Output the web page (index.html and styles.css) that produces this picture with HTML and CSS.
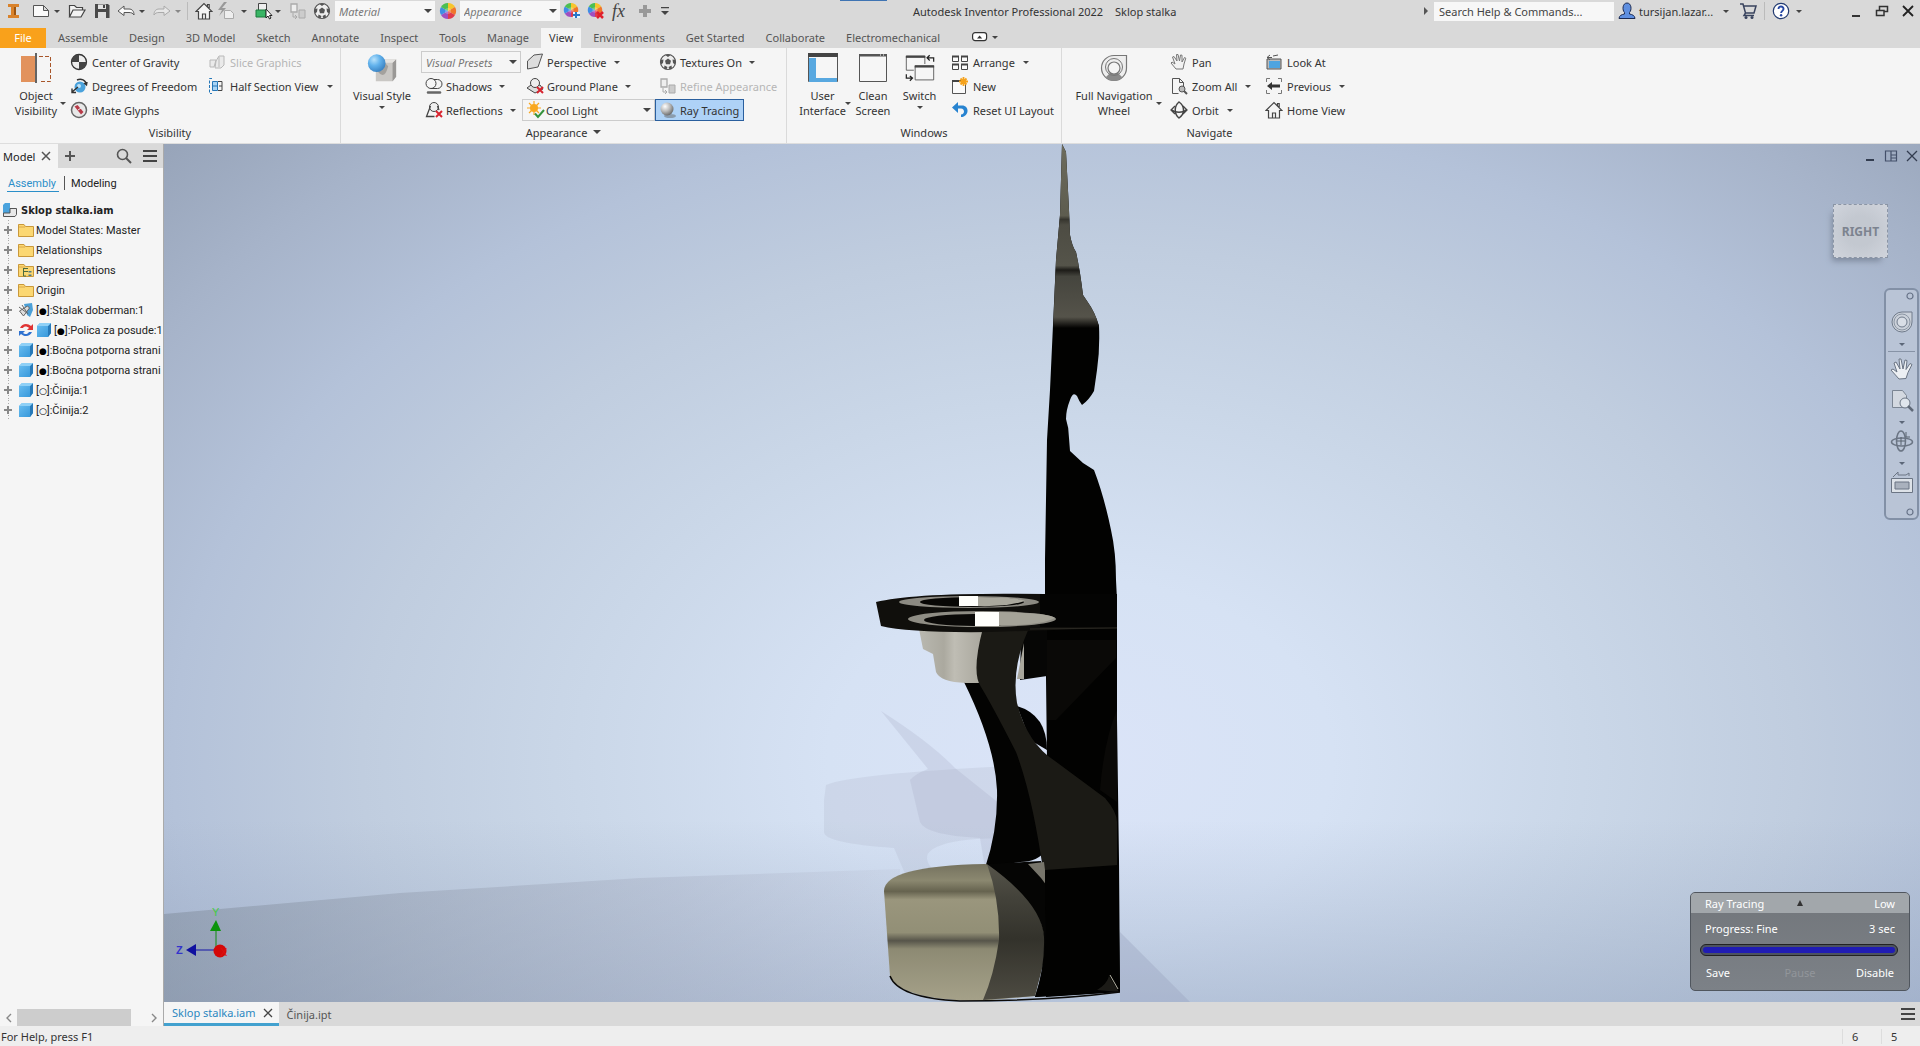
FILE: index.html
```html
<!DOCTYPE html>
<html lang="en">
<head>
<meta charset="utf-8">
<title>Autodesk Inventor Professional 2022 - Sklop stalka</title>
<link rel="stylesheet" href="styles.css">
</head>
<body>
<svg class="sprite" aria-hidden="true">
  <defs>
    <linearGradient id="cubeFace" x1="0" y1="0" x2="1" y2="1"><stop offset="0" stop-color="#6cc0f2"/><stop offset="1" stop-color="#3294d8"/></linearGradient>
    <radialGradient id="ballBlue" cx=".35" cy=".3" r=".7"><stop offset="0" stop-color="#b8e2fb"/><stop offset=".5" stop-color="#62b2ec"/><stop offset="1" stop-color="#3d86c6"/></radialGradient>
    <radialGradient id="ballGrey" cx=".35" cy=".3" r=".75"><stop offset="0" stop-color="#fff"/><stop offset=".5" stop-color="#bbb"/><stop offset="1" stop-color="#666"/></radialGradient>
  </defs>
  <symbol id="folder" viewBox="0 0 16 14"><path d="M.5 1.500H6l1.500 2h8v10H.5z" fill="#fbd772" stroke="#c9983a"/><path d="M1 4h6" stroke="#dba94a"/></symbol>
  <symbol id="cube" viewBox="0 0 16 16"><path d="M1 4l3-3h11v10l-3 4H1z" fill="url(#cubeFace)"/><path d="M12 4l3-3v10l-3 4z" fill="#2779b8"/><path d="M1 4l3-3h11l-3 3z" fill="#8fd0f6"/></symbol>
  <symbol id="mesh" viewBox="0 0 18 18"><circle cx="9" cy="9" r="7.500" fill="#eee" stroke="#555" stroke-width="1.200"/><path d="M9 5.500l3 2.200-1 3.600H7L6 7.700zM6 1.800h6L9 4zM1.500 7l3-.5L4 10l-2 1.500zM16.500 7l-3-.5.5 3.500 2 1.500zM5 15.500l.5-3 3 1.500-1 2.500zM13 15.500l-.5-3-3 1.500 1 2.500z" fill="#555"/></symbol>
  <symbol id="wheel" viewBox="0 0 18 18"><path d="M9 9V1a8 8 0 0 1 7 4z" fill="#f7c52c"/><path d="M9 9l7-4a8 8 0 0 1 0 8z" fill="#f0752a"/><path d="M9 9l7 4a8 8 0 0 1-7 4z" fill="#e03a4b"/><path d="M9 9v8a8 8 0 0 1-7-4z" fill="#a04fc0"/><path d="M9 9l-7 4a8 8 0 0 1 0-8z" fill="#3f8ee6"/><path d="M9 9L2 5a8 8 0 0 1 7-4z" fill="#4cbf52"/><circle cx="9" cy="9" r="3" fill="#fff" opacity=".25"/></symbol>
  <symbol id="house" viewBox="0 0 18 18"><path d="M1 9.500L9 1.500l8 8h-2.500V17h-11V9.500zM12.500 5V2.500h1.700V7M7.500 17v-5h3v5" fill="#f4f4f4" stroke="#444" stroke-width="1.200"/></symbol>
  <symbol id="refine" viewBox="0 0 18 18"><path d="M2 2h6v8H2z" fill="#eee" stroke="#aaa" stroke-width="1.300"/><path d="M10 8h6v8h-6z" fill="#ccc" stroke="#aaa"/><path d="M4 11v4h4M6 13l2 2-2 2" fill="none" stroke="#aaa"/></symbol>
</svg>

<div class="app">
<header class="titlebar">
  <div class="quick">
    <svg viewBox="0 0 18 18"><path d="M4 2h11v3h-3v8h3v3H4v-3h3V5H4z" fill="#d9822b"/><path d="M10 5h2v8h-2z" fill="#9a5412"/></svg>
    <button aria-label="New"><svg viewBox="0 0 18 18"><path d="M1.500 3.500h10l5 5v6h-15zM11.500 3.500v5h5" fill="#fafafa" stroke="#555"/></svg></button><i class="caret"></i>
    <button aria-label="Open"><svg viewBox="0 0 18 18"><path d="M1.500 15V3.500h5l2 2h6V8M1.500 15L5 8h12l-4 7z" fill="#f2f2f2" stroke="#444" stroke-width="1.200"/></svg></button>
    <button aria-label="Save"><svg viewBox="0 0 18 18"><path d="M2 2h13l1.500 1.500V16H2z" fill="#4a4a4a"/><path d="M5 2.500h8V7H5z" fill="#e4e4e4"/><path d="M5 10h8v6H5z" fill="#ddd"/><path d="M10 3h2v3h-2z" fill="#444"/></svg></button>
    <button aria-label="Undo"><svg viewBox="0 0 18 18"><path d="M1 9l6-5v3h5c3 0 5 2 5 6-1-2-3-2.500-5-2.500H7v3z" fill="#fafafa" stroke="#555"/></svg></button><i class="caret"></i>
    <button aria-label="Redo"><svg viewBox="0 0 18 18"><path d="M17 9l-6-5v3H6c-3 0-5 2-5 6 1-2 3-2.500 5-2.500h5v3z" fill="#e6e6e6" stroke="#aaa"/></svg></button><i class="caret dim"></i>
    <i class="rule"></i>
    <button aria-label="Home"><svg><use href="#house"/></svg></button>
    <button aria-label="Update"><svg viewBox="0 0 18 18"><path d="M7 0L1 8h4l-3 6 7-8H5l5-6z" fill="#999"/><path d="M7.500 8.500h6l3 3v5h-9z" fill="#eee" stroke="#aaa"/></svg></button><i class="caret"></i>
    <button aria-label="Select"><svg viewBox="0 0 18 18"><path d="M3.500 1.500h8v8h-8z" fill="#eee" stroke="#444"/><path d="M1 8h10v7H1z" fill="#39b565" stroke="#1b7a3c"/><path d="M11 7v9l2-2 1.500 3 1.500-1-1.500-2.500H17z" fill="#fff" stroke="#222"/></svg></button><i class="caret"></i>
    <svg><use href="#refine"/></svg>
    <svg><use href="#mesh"/></svg>
    <label class="combo flat"><select aria-label="Material"><option>Material</option></select></label>
    <svg><use href="#wheel"/></svg>
    <label class="combo flat"><select aria-label="Appearance"><option>Appearance</option></select></label>
    <button aria-label="Adjust"><svg viewBox="0 0 18 18"><use href="#wheel" width="16" height="16"/><path d="M10 10h7v6h-7z" fill="#eaf4ff"/><path d="M10 13h7M13 10v6" stroke="#2a77c8" stroke-width="2"/></svg></button>
    <button aria-label="Clear"><svg viewBox="0 0 18 18"><use href="#wheel" width="16" height="16"/><path d="M10 10l6 6m0-6l-6 6" stroke="#e0202c" stroke-width="2.500"/></svg></button>
    <button class="fx" aria-label="Parameters">fx</button>
    <svg viewBox="0 0 18 18"><path d="M9 3v12M3 9h12" stroke="#999" stroke-width="4"/></svg>
    <svg viewBox="0 0 18 18"><path d="M5 5h8v1.200H5zM5 9h8l-4 4z" fill="#444"/></svg>
  </div>
  <div class="title"><span>Autodesk Inventor Professional 2022</span><span>Sklop stalka</span></div>
  <div class="account">
    <i class="caret right"></i>
    <input type="text" aria-label="Search" placeholder="Search Help &amp; Commands...">
    <svg viewBox="0 0 18 18"><path d="M1 16.500c0-3 3-4 5.500-4.500V10.500C4 8 4.500 1 9 1s5 7 2.500 9.500V12c2.500.5 5.500 1.500 5.500 4.500z" fill="#5f8fe0" stroke="#1c2a52"/></svg>
    <span class="user">tursijan.lazar...</span><i class="caret"></i>
    <svg viewBox="0 0 18 18"><path d="M1 2h3l2.500 9H15l2-7H5M6.500 11L5 13.500h10" fill="none" stroke="#39435e" stroke-width="1.500"/><circle cx="7" cy="15.500" r="1.500" fill="#39435e"/><circle cx="13" cy="15.500" r="1.500" fill="#39435e"/></svg>
    <i class="rule"></i>
    <svg viewBox="0 0 18 18"><circle cx="9" cy="9" r="7.700" fill="#fff" stroke="#223a70" stroke-width="1.200"/><path d="M6.500 7c0-3.500 5.200-3 5 0 0 1.800-2.400 2-2.400 4" fill="none" stroke="#2748a5" stroke-width="1.900"/><circle cx="9.100" cy="13.200" r="1.200" fill="#2748a5"/></svg><i class="caret"></i>
    <span class="wins">
      <button aria-label="Minimize"><svg viewBox="0 0 14 14"><path d="M3 12h8" stroke="#333" stroke-width="2"/></svg></button>
      <button aria-label="Restore"><svg viewBox="0 0 14 14"><path d="M4.500 6V2.500h8v5H9M1.500 6.500H9v5H1.500z" fill="none" stroke="#333" stroke-width="1.500"/></svg></button>
      <button aria-label="Close"><svg viewBox="0 0 14 14"><path d="M2 2l10 10M12 2L2 12" stroke="#222" stroke-width="1.800"/></svg></button>
    </span>
  </div>
</header>

<nav class="tabs">
  <button class="file">File</button><button>Assemble</button><button>Design</button><button>3D Model</button><button>Sketch</button><button>Annotate</button><button>Inspect</button><button>Tools</button><button>Manage</button><button class="on">View</button><button>Environments</button><button>Get Started</button><button>Collaborate</button><button>Electromechanical</button>
  <button class="fold" aria-label="Minimize ribbon"><svg viewBox="0 0 16 10"><rect x=".6" y=".6" width="14" height="8" rx="2.500" fill="#fff" stroke="#333" stroke-width="1.200"/><path d="M5 6.500l2.600-3 2.600 3z" fill="#333"/></svg><i class="caret"></i></button>
</nav>

<section class="ribbon">
  <div class="panel visibility">
    <div class="tools">
      <button class="big side"><svg viewBox="0 0 30 30"><path d="M0 3h14v26H0z" fill="#e2925c"/><path d="M15 0v30" stroke="#333" stroke-width="1.500"/><path d="M18 3.500h11.500v25H18" fill="none" stroke="#a8562a" stroke-dasharray="4 2"/></svg><span>Object<br>Visibility<i class="caret"></i></span></button>
      <div class="col">
        <button><svg viewBox="0 0 18 18"><circle cx="9" cy="9" r="7.500" fill="#eee" stroke="#333" stroke-width="1.300"/><path d="M9 9V1.500A7.500 7.500 0 0 0 1.500 9zM9 9v7.500A7.500 7.500 0 0 0 16.500 9z" fill="#444"/></svg>Center of Gravity</button>
        <button><svg viewBox="0 0 18 18"><circle cx="10" cy="10" r="5.500" fill="#4aa2dc"/><circle cx="9" cy="9" r="2" fill="#bfe3f8"/><path d="M7 3c4-2 9 0 9.500 5M14 6l2.500 2L17 5M8 10l-6 5M2 11.500V15.500h4" fill="none" stroke="#333" stroke-width="1.400"/></svg>Degrees of Freedom</button>
        <button><svg viewBox="0 0 18 18"><circle cx="9" cy="9" r="7.500" fill="#e8e8e8" stroke="#666" stroke-width="1.500"/><path d="M4.500 5.500l3-1.500 6 7-2.500 2.500z" fill="#b83a48"/><path d="M8 9l3-2" stroke="#eee"/></svg>iMate Glyphs</button>
      </div>
      <div class="col">
        <button disabled><svg viewBox="0 0 18 18"><path d="M2 7h6l-2 7H2zM8 8l3-5h5v9l-3 3H7zM11 4v10" fill="#eaeaea" stroke="#b8b8b8"/></svg>Slice Graphics</button>
        <button><svg viewBox="0 0 18 18"><path d="M4.500 4.500h5v9h-5zM9.500 9h-5" fill="#a9d4f5" stroke="#2577b8"/><path d="M10 4.500h4v9h-4M11 9h3" fill="none" stroke="#444"/><path d="M4 1.500H1.500v15H4" fill="none" stroke="#2577b8" stroke-dasharray="3 1.500"/></svg>Half Section View<i class="caret"></i></button>
      </div>
    </div>
    <div class="name">Visibility</div>
  </div>

  <div class="panel appearance">
    <div class="tools">
      <button class="big"><svg viewBox="0 0 34 32"><path d="M10 9l4-3h19v20l-4 5H10z" fill="#c9c7c4"/><path d="M29 10l4-4v20l-4 5z" fill="#9a9896"/><path d="M10 9l4-3h19l-4 4H10z" fill="#e5e3e0"/><path d="M12 20q8 10 12-6l-3-3z" fill="#8b8784" opacity=".6"/><circle cx="11" cy="10.500" r="10" fill="url(#ballBlue)"/></svg><span>Visual Style</span><i class="caret"></i></button>
      <div class="col">
        <label class="combo"><select class="muted" aria-label="Visual presets"><option>Visual Presets</option></select></label>
        <button class="in"><svg viewBox="0 0 18 18"><circle cx="6" cy="6.500" r="5" fill="#f6f6f6" stroke="#444"/><path d="M9 2.500h3.500a4.500 4.500 0 0 1 0 9H6" fill="none" stroke="#444"/><path d="M3 15.500h12" stroke="#666" stroke-width="2.500" stroke-linecap="round"/></svg>Shadows<i class="caret"></i></button>
        <button class="in"><svg viewBox="0 0 18 18"><circle cx="9" cy="6" r="4.500" fill="#eee" stroke="#444"/><path d="M5.500 5L1.500 15.500h8M12.500 5l1.500 4" fill="none" stroke="#444" stroke-width="1.300"/><path d="M11 10l6 6m0-6l-6 6" stroke="#d8242f" stroke-width="2"/></svg>Reflections<i class="caret"></i></button>
      </div>
      <div class="col">
        <button class="in"><svg viewBox="0 0 18 18"><path d="M1.500 16V8L8 2l8.500-1L12 14z" fill="#ddd" stroke="#555"/></svg>Perspective<i class="caret"></i></button>
        <button class="in"><svg viewBox="0 0 18 18"><path d="M1 11l4-3h9l3 4-8 4z" fill="#ddd" stroke="#444"/><circle cx="9" cy="6" r="4.500" fill="#eee" stroke="#444"/><path d="M11 10l6 6m0-6l-6 6" stroke="#d8242f" stroke-width="2"/></svg>Ground Plane<i class="caret"></i></button>
        <label class="combo light"><svg viewBox="0 0 18 18"><circle cx="7" cy="7" r="4" fill="#f9a820"/><path d="M7 0v14M0 7h14M2 2l10 10M12 2L2 12" stroke="#f9a820" stroke-width="1.200"/><path d="M8 12.500l3 3.500 6-7" fill="none" stroke="#35933d" stroke-width="2"/></svg><select aria-label="Lighting style"><option>Cool Light</option></select></label>
      </div>
      <div class="col">
        <button class="in"><svg><use href="#mesh"/></svg>Textures On<i class="caret"></i></button>
        <button class="in" disabled><svg><use href="#refine"/></svg>Refine Appearance</button>
        <button class="in pressed"><svg viewBox="0 0 18 18"><ellipse cx="11" cy="15" rx="6" ry="2" fill="#666" opacity=".5"/><circle cx="8" cy="8" r="6.500" fill="url(#ballGrey)"/></svg>Ray Tracing</button>
      </div>
    </div>
    <div class="name">Appearance<i class="caret wide"></i></div>
  </div>

  <div class="panel windows">
    <div class="tools">
      <button class="big side"><svg viewBox="0 0 30 30"><path d="M.5 1.500h29v27H.5z" fill="#f6f6f6" stroke="#555"/><path d="M0 0h30v4H0z" fill="#444"/><path d="M1 5h7v24H1z" fill="#58a8e0"/><path d="M1 25h28v4H1z" fill="#58a8e0"/></svg><span>User<br>Interface<i class="caret"></i></span></button>
      <button class="big"><svg viewBox="0 0 30 30"><path d="M1.500 1.500h27v27h-27z" fill="#f6f6f6" stroke="#555"/><path d="M1 1h28v2.500H1z" fill="#555"/><path d="M22 2h1m2 0h1" stroke="#fff"/></svg><span>Clean<br>Screen</span></button>
      <button class="big switch"><svg viewBox="0 0 34 30"><path d="M10 17.500H1.500v-16h21v9" fill="#f6f6f6" stroke="#555"/><path d="M1 1h22v2.500H1z" fill="#444"/><path d="M11.500 12.500h21v16h-21z" fill="#f6f6f6" stroke="#555"/><path d="M11 12h22v2.500H11z" fill="#444"/><path d="M32.500 8V3.500H25M28 .5l-3 3 3 3M1.500 22v4.500H8M5.500 24l3 2.500-3 3" fill="none" stroke="#222" stroke-width="1.400"/></svg><span>Switch</span><i class="caret"></i></button>
      <div class="col">
        <button><svg viewBox="0 0 18 18"><path d="M1.500 3.500h6v5h-6zM10.500 3.500h6v5h-6zM1.500 11.500h6v5h-6zM10.500 11.500h6v5h-6z" fill="#fafafa" stroke="#444"/><path d="M1 3.500h7m2 0h7M1 11.500h7m2 0h7" stroke="#444" stroke-width="2"/></svg>Arrange<i class="caret"></i></button>
        <button><svg viewBox="0 0 18 18"><path d="M1.500 3.500h13v13h-13z" fill="#fafafa" stroke="#555"/><path d="M1 4h9" stroke="#444" stroke-width="2"/><path d="M12.500 0v9M8 4.500h9M9.500 1.500l6 6m0-6l-6 6" stroke="#f5a21c" stroke-width="1.800"/></svg>New</button>
        <button><svg viewBox="0 0 18 18"><path d="M1 6.500L7 1v3.500h4c8 0 7 11.500-1 11.500v-2.500c4 0 4-6 0-6H7V12z" fill="#2783d0"/></svg>Reset UI Layout</button>
      </div>
    </div>
    <div class="name">Windows</div>
  </div>

  <div class="panel navigate">
    <div class="tools">
      <button class="big side"><svg viewBox="0 0 30 30"><path d="M15 2.500h12.500V15A12.500 12.500 0 1 1 15 2.500z" fill="#eee" stroke="#777" stroke-width="1.200"/><path d="M7 24a10 10 0 0 0 16 0l-4-4h-8z" fill="#8a8a8a"/><circle cx="15" cy="14" r="8.500" fill="none" stroke="#777"/><circle cx="15" cy="15" r="6" fill="#f4f4f4" stroke="#777" stroke-width="1.200"/></svg><span>Full Navigation<br>Wheel<i class="caret"></i></span></button>
      <div class="col">
        <button><svg viewBox="0 0 18 18"><path d="M6 16l-5-6 1-1 3 2-2.500-7 1.500-.5L7 8 6.500 1.500H8L9.500 8l1-6 1.500.2L12 9l2.500-4.500 1.300.7L14 11l-1 5z" fill="#f2f2f2" stroke="#777"/></svg>Pan</button>
        <button><svg viewBox="0 0 18 18"><path d="M2.500 1.500h7l4 4v6M2.500 1.500v15h6M9.500 1.500v4h4" fill="none" stroke="#555"/><circle cx="12" cy="12" r="3" fill="#bbb" stroke="#555"/><path d="M14 14l3 3" stroke="#555" stroke-width="2"/></svg>Zoom All<i class="caret"></i></button>
        <button><svg viewBox="0 0 18 18"><path d="M9 1c6 4 6 12 0 16-5-4-5-12 0-16z" fill="none" stroke="#444" stroke-width="1.500"/><path d="M13 5l4 4-4 4M5 5L1 9l4 4M2 9c3 3 11 3 14 0" fill="none" stroke="#444" stroke-width="1.300"/></svg>Orbit<i class="caret"></i></button>
      </div>
      <div class="col">
        <button><svg viewBox="0 0 18 18"><path d="M2 6h14v10H2z" fill="#bbb" stroke="#555"/><path d="M4 8h11v7H4z" fill="#4ea4e0"/><path d="M2 4.500h5M5 2l-3 2.500L5 7M8 3l5-1" fill="none" stroke="#555"/></svg>Look At</button>
        <button><svg viewBox="0 0 18 18"><path d="M5 1.500H1.500V5M13 1.500h3.500V5M5 16.500H1.500V13M13 16.500h3.500V13" fill="none" stroke="#777"/><path d="M2 9l5-4v2.500h8v3H7V13z" fill="#333"/></svg>Previous<i class="caret"></i></button>
        <button><svg><use href="#house"/></svg>Home View</button>
      </div>
    </div>
    <div class="name">Navigate</div>
  </div>
</section>

<main class="work">
  <aside class="browser">
    <div class="bhead"><button class="btab">Model <svg viewBox="0 0 10 10"><path d="M1 1l8 8m0-8L1 9" stroke="#555" stroke-width="1.500"/></svg></button>
      <button aria-label="Add"><svg viewBox="0 0 12 12"><path d="M6 1v10M1 6h10" stroke="#555" stroke-width="2"/></svg></button>
      <button class="find" aria-label="Find"><svg viewBox="0 0 16 16"><circle cx="6.500" cy="6.500" r="5" fill="none" stroke="#555" stroke-width="1.600"/><path d="M10 10l5 5" stroke="#555" stroke-width="2"/></svg></button>
      <button aria-label="Menu"><svg viewBox="0 0 16 16"><path d="M1 3h14M1 8h14M1 13h14" stroke="#444" stroke-width="1.800"/></svg></button></div>
    <div class="modes"><button class="on">Assembly</button><button>Modeling</button></div>
    <ul class="tree">
      <li class="root"><svg viewBox="0 0 16 16"><path d="M1 3l2-2h5v10H1z" fill="#4ba3dd"/><path d="M8 6.500h6.500v6l-1.500 2H1.500V11H8z" fill="#e8e8e8" stroke="#555"/></svg><b>Sklop stalka.iam</b></li>
      <li><i class="plus"></i><svg><use href="#folder"/></svg><span>Model States: Master</span></li>
      <li><i class="plus"></i><svg><use href="#folder"/></svg><span>Relationships</span></li>
      <li><i class="plus"></i><svg viewBox="0 0 16 16"><use href="#folder"/><path d="M5.500 6v8H8M5.500 9.500H10M10 6.500H6" fill="none" stroke="#4c6b3e"/><path d="M10.500 9h3v1.500h-3zM10.500 12.500h3V14h-3z" fill="#4f7a86"/></svg><span>Representations</span></li>
      <li><i class="plus"></i><svg><use href="#folder"/></svg><span>Origin</span></li>
      <li><i class="plus"></i><svg viewBox="0 0 16 16"><path d="M6 2l8-1 1 7-3 7-3-2z" fill="#4ba0d8"/><path d="M1.500 9l8-5 2 2-6 8zM1 5l8 6M4 3l6 9" fill="#ddd" stroke="#666"/></svg><span>[<small>●</small>]:Stalak doberman:1</span></li>
      <li><i class="plus"></i><svg viewBox="0 0 16 16"><path d="M2 6c2-5 8-5 11-2l2-2v6H9l2-2c-2-2-5-2-6 0z" fill="#e03434"/><path d="M14 10c-2 5-8 5-11 2l-2 2V9h6l-2 2c2 2 5 1 6-1z" fill="#2f72d0"/></svg><svg><use href="#cube"/></svg><span>[<small>●</small>]:Polica za posude:1</span></li>
      <li><i class="plus"></i><svg><use href="#cube"/></svg><span>[<small>●</small>]:Bočna potporna strani</span></li>
      <li><i class="plus"></i><svg><use href="#cube"/></svg><span>[<small>●</small>]:Bočna potporna strani</span></li>
      <li><i class="plus"></i><svg><use href="#cube"/></svg><span>[<small>○</small>]:Činija:1</span></li>
      <li><i class="plus"></i><svg><use href="#cube"/></svg><span>[<small>○</small>]:Činija:2</span></li>
    </ul>
    <div class="hscroll"><svg viewBox="0 0 8 10"><path d="M6 1L2 5l4 4" fill="none" stroke="#888" stroke-width="1.400"/></svg><div class="thumb"></div><svg viewBox="0 0 8 10"><path d="M2 1l4 4-4 4" fill="none" stroke="#888" stroke-width="1.400"/></svg></div>
  </aside>

  <div class="stage">
    <div class="viewport">
      <svg class="scene" viewBox="164 144 1756 858" preserveAspectRatio="xMidYMid slice" role="img" aria-label="Stand model, right view">
        <defs>
          <radialGradient id="sky" gradientUnits="userSpaceOnUse" cx="0" cy="0" r="1" gradientTransform="translate(1080 760) scale(1260 900)">
            <stop offset="0" stop-color="#dbe4f8"/><stop offset=".2" stop-color="#d6e2f4"/><stop offset=".4" stop-color="#cad7e8"/><stop offset=".57" stop-color="#c0cddf"/><stop offset=".72" stop-color="#b4c2d9"/><stop offset=".87" stop-color="#a6b3c9"/><stop offset="1" stop-color="#97a4b9"/>
          </radialGradient>
          <linearGradient id="floor" x1="0" y1="0" x2="0" y2="1"><stop offset="0" stop-color="#8a9bb8" stop-opacity="0"/><stop offset="1" stop-color="#8a9bb8" stop-opacity=".4"/></linearGradient>
          <linearGradient id="shade" x1="0" y1="0" x2="1" y2="0"><stop offset="0" stop-color="#7f8b9a" stop-opacity=".5"/><stop offset=".7" stop-color="#a4abbf" stop-opacity=".35"/><stop offset="1" stop-color="#b0b5c8" stop-opacity=".15"/></linearGradient>
          <linearGradient id="foot" x1="0" y1="0" x2="0" y2="1"><stop offset="0" stop-color="#75725f"/><stop offset=".12" stop-color="#8b8870"/><stop offset=".2" stop-color="#66634f"/><stop offset=".26" stop-color="#9a967d"/><stop offset=".5" stop-color="#928f76"/><stop offset=".56" stop-color="#57554a"/><stop offset=".62" stop-color="#8d8a73"/><stop offset="1" stop-color="#a5a189"/></linearGradient>
          <linearGradient id="leg" x1="0" y1="0" x2="0" y2="1"><stop offset="0" stop-color="#56544a"/><stop offset=".25" stop-color="#43423a"/><stop offset=".55" stop-color="#33322b"/><stop offset="1" stop-color="#4d4b42"/></linearGradient>
          <linearGradient id="spire" gradientUnits="userSpaceOnUse" x1="0" y1="144" x2="0" y2="328"><stop offset="0" stop-color="#6d6c5d"/><stop offset=".39" stop-color="#5d5c4f"/><stop offset=".41" stop-color="#36352e"/><stop offset=".44" stop-color="#4d4c43"/><stop offset=".66" stop-color="#55544a"/><stop offset=".685" stop-color="#1d1c18"/><stop offset=".72" stop-color="#45453e"/><stop offset=".94" stop-color="#55534a"/><stop offset="1" stop-color="#020201"/></linearGradient>
          <linearGradient id="bowl" x1="0" y1="0" x2="1" y2="0"><stop offset="0" stop-color="#b9b8b0"/><stop offset=".35" stop-color="#aba99f"/><stop offset=".5" stop-color="#bfbdb4"/><stop offset="1" stop-color="#a3a197"/></linearGradient>
        </defs>
        <rect x="164" y="144" width="1756" height="858" fill="url(#sky)"/>
        <rect x="164" y="820" width="1756" height="182" fill="url(#floor)"/>
        <path d="M164 914L400 893 640 878 900 869V1002H164z" fill="url(#shade)"/>
        <path d="M1120 932l70 70h-70z" fill="#9ba6c0" opacity=".4"/>
        <path d="M826 785Q850 774 1010 766V838Q960 838 942 845 920 852 930 866L938 876H906Q900 862 894 848 824 843 824 832V800z" fill="#a3a9c0" opacity=".2"/>
        <path d="M910 780Q915 774 928 769L881 711Q930 742 955 768L1010 812V868H985L980 838Q925 835 920 822z" fill="#a3a9c0" opacity=".24"/>

        <path d="M1062 144L1066 152 1069 210 1070 235Q1072 246 1076 252 1080 270 1083 295L1087 301Q1095 312 1099 326 1100 350 1097 370L1094 391Q1089 400 1082 405 1079 401 1077 396 1073 391 1070 400 1066 410 1066 419 1069 428 1069 438L1070 451 1083 463 1094 470Q1104 496 1111 530 1116 552 1116 580L1117 600V720L1119 860 1120 992 1046 997 1047 760 1045 594V560L1047 440 1050 390 1053 325 1056 260 1060 215z" fill="#020201"/>
        <path d="M1062 144L1066 152 1069 210 1070 235Q1072 246 1076 252 1080 270 1083 295L1087 301Q1095 312 1099 326V329H1053L1056 260 1060 215z" fill="url(#spire)"/>
        <path d="M964 682L990 680 1026 745 1046 800V850Q1038 862 1020 862L985 868Q998 830 997 790 995 745 964 682z" fill="#030302"/>
        <path d="M1017 706Q1047 715 1047 750L1030 740z" fill="#020202"/>
        <path d="M1021 630h26v46l-27 4z" fill="#060605"/>
        <path d="M919 629l4 20 10 5 3 18q4 10 30 11h15l9-54z" fill="url(#bowl)"/>
        <path d="M1024 643v36h-7z" fill="#a9a79d"/>
        <path d="M983 628h46q-18 40-12 75 10 40 38 58l50 37q12 14 12 24v46l-73 9q-11-80-28-125-24-47-35-65-10-14 2-59z" fill="#1b1a15"/>
        <path d="M1047 640h69v18l-60 62h-9z" fill="#0a0907"/>
        <path d="M1100 790q4-50 17-80v92z" fill="#0a0907"/>
        <path d="M876 602Q915 592 1045 594H1117V628L990 632Q910 633 881 626z" fill="#100f0c"/>
        <path d="M1040 594h77v33h-77z" fill="#040403"/>
        <path d="M1030 629l87-1" stroke="#2a2822"/>
        <ellipse cx="969" cy="602" rx="70" ry="6" fill="#8d8b83"/><ellipse cx="972" cy="602" rx="52" ry="5" fill="#080705"/><path d="M977 597q40 0 48 4-20 6-48 5z" fill="#aaa89d"/><path d="M959 596h19v10h-19z" fill="#fffffb"/>
        <ellipse cx="982" cy="619" rx="74" ry="8" fill="#8f8d84"/><ellipse cx="974" cy="620" rx="50" ry="6" fill="#0a0907"/><path d="M999 612q50 1 56 6-16 8-56 7z" fill="#a5a398"/><path d="M975 612h24v14h-24z" fill="#fffffb"/>
        <path d="M884 891Q884 866 985 864Q1030 868 1047 940L1035 996 980 1001Q900 1000 890 976z" fill="url(#foot)"/>
        <path d="M987 864Q1025 880 1036 908Q1050 940 1043 965L1035 996 983 1000Q994 975 999 940Q1000 900 987 864z" fill="url(#leg)"/>
        <path d="M987 864l54-3 7 25v110l-13 1q10-30 9-60-2-34-57-73z" fill="#050504"/>
        <path d="M1028 864l16-2 3 24-6-8z" fill="#77756b"/>
        <path d="M1045 870l73-5 2 127-85 5q14-40 10-90z" fill="#020201"/>
        <path d="M1097 990q10-6 12-14l10 16z" fill="#1b1a16"/><path d="M1110 975l8 14" stroke="#b5b3a4"/>
        <path d="M890 976q8 22 70 25 90 0 160-9" fill="none" stroke="#0b0a08" stroke-width="1.500"/>
      </svg>

      <svg class="axes" viewBox="0 0 60 56" aria-label="Axes"><path d="M41 40V14" stroke="#118a11"/><path d="M41 12l-6 11h11z" fill="#0c940c"/><path d="M40 42H18" stroke="#1515a8"/><path d="M11 42l10-6v12z" fill="#1010a0"/><circle cx="45" cy="43" r="6.500" fill="#d40808"/></svg>
      <span class="ax y">Y</span><span class="ax z">Z</span><span class="ax x">X</span>

      <div class="docwins">
        <button aria-label="Minimize document"><svg viewBox="0 0 14 14"><path d="M3 11h8" stroke="#333d50" stroke-width="2"/></svg></button>
        <button aria-label="Restore document"><svg viewBox="0 0 14 14"><path d="M1.500 2h11v10h-11zM7 2v10M7 6h5M7 9h5" fill="none" stroke="#44506a" stroke-width="1.200"/></svg></button>
        <button aria-label="Close document"><svg viewBox="0 0 14 14"><path d="M2 2l10 10M12 2L2 12" stroke="#333d50" stroke-width="1.300"/></svg></button>
      </div>
      <button class="viewcube">RIGHT</button>
      <div class="navbar">
        <svg class="dot" viewBox="0 0 8 8"><circle cx="4" cy="4" r="3" fill="none" stroke="#667287" stroke-width="1.200"/></svg>
        <button aria-label="Wheel"><svg viewBox="0 0 24 24"><path d="M12 2h10v10A10 10 0 1 1 12 2z" fill="#cbd1da" stroke="#707b8b"/><circle cx="12" cy="12" r="8" fill="none" stroke="#8c96a4"/><circle cx="12" cy="12" r="5" fill="#d9dee6" stroke="#707b8b"/></svg></button><i class="caret"></i>
        <hr>
        <button aria-label="Pan"><svg viewBox="0 0 24 24"><path d="M9 22l-8-9 2-1 4 3-3-9 2-1 4 7-1-10h2l2 10 2-9 2 .5-1 9 4-6 2 1-4 8-2 6z" fill="#eceff3" stroke="#6b7584"/></svg></button>
        <button aria-label="Zoom"><svg viewBox="0 0 24 24"><path d="M2.500 2.500h10l4 5v12h-14z" fill="#d3d8e0" stroke="#7b8593"/><circle cx="15" cy="15" r="5" fill="#dfe5ec" stroke="#6b7584"/><path d="M18 18l5 5" stroke="#5f6978" stroke-width="2.500"/></svg></button><i class="caret"></i>
        <button aria-label="Orbit"><svg viewBox="0 0 24 24"><ellipse cx="11" cy="12" rx="4.500" ry="10" fill="none" stroke="#6b7584" stroke-width="1.500"/><ellipse cx="12" cy="13" rx="10.500" ry="4" fill="none" stroke="#6b7584" stroke-width="1.500"/><path d="M11 8v8M7 12h8M16 3v5h4" stroke="#59636f" fill="none"/></svg></button><i class="caret"></i>
        <button aria-label="Look at"><svg viewBox="0 0 24 24"><path d="M1.500 8.500h21v14h-21z" fill="#dde2e8" stroke="#6b7584"/><path d="M5 12h14v7H5z" fill="#a9b1bd" stroke="#6b7584"/><path d="M3 7l5-5v3h8l3-2v3" fill="none" stroke="#6b7584"/></svg></button>
        <svg class="dot" viewBox="0 0 8 8"><circle cx="4" cy="4" r="3" fill="none" stroke="#667287" stroke-width="1.200"/></svg>
      </div>
      <div class="ray">
        <div class="rayhead"><span>Ray Tracing</span><i class="up"></i><span>Low</span></div>
        <div class="rayrow"><span>Progress: Fine</span><span>3 sec</span></div>
        <div class="bar"><div></div></div>
        <div class="rayrow acts"><button>Save</button><button disabled>Pause</button><button>Disable</button></div>
      </div>
    </div>
    <div class="docs"><button class="on">Sklop stalka.iam <svg viewBox="0 0 10 10"><path d="M1 1l8 8m0-8L1 9" stroke="#444" stroke-width="1.300"/></svg></button><button>Činija.ipt</button><button class="more" aria-label="Documents"><svg viewBox="0 0 16 16"><path d="M1 3h14M1 8h14M1 13h14" stroke="#444" stroke-width="1.800"/></svg></button></div>
  </div>
</main>
<footer class="status"><span>For Help, press F1</span><span class="num">6</span><span class="num">5</span></footer>
</div>
</body>
</html>
```
FILE: styles.css
```css
* { box-sizing: border-box; }
body { margin: 0; background: #d9d9d9; color: #333; font: 11px/15px "Noto Sans", "Open Sans", sans-serif; }
button, input, select { font: inherit; color: inherit; border: 0; background: none; padding: 0; margin: 0; white-space: nowrap; }
svg { display: block; flex: none; width: 18px; height: 18px; }
.sprite { position: absolute; width: 0; height: 0; }
.app { min-height: 100vh; display: flex; flex-direction: column; }
.caret { flex: none; width: 0; height: 0; border: 3px solid transparent; border-top-color: #444; border-bottom: 0; }
.caret.dim { border-top-color: #888; }
.caret.wide { border-width: 4px 4px 0; }
.caret.right { border: 4px solid transparent; border-left-color: #555; border-right: 0; }
.rule { width: 1px; height: 18px; background: #bbb; }

/* title bar */
.titlebar { display: flex; height: 24px; }
.quick { display: grid; align-items: center; justify-items: start; grid-template-columns: 28px 22px 14px 25px 24px 22px 14px 22px 12px 8px 22px 24px 14px 20px 14px 24px 22px 104px 21px 103px 24px 25px 24px 20px 18px; padding-left: 4px; height: 22px; width: 680px; }
.quick .fx { font: italic 18px/18px "Liberation Serif", serif; color: #444; }
.title { flex: 1; display: flex; gap: 12px; padding: 4px 0 0 233px; white-space: nowrap; background: linear-gradient(#3f74b3, #3f74b3) 160px 0 / 47px 1px no-repeat; }
.combo { position: relative; display: block; width: 100%; height: 22px; border: 1px solid #ccc; }
.combo select { appearance: none; width: 100%; height: 20px; padding-left: 4px; }
.combo::after { content: ""; position: absolute; right: 3px; top: 8px; border: 4px solid transparent; border-top-color: #444; border-bottom: 0; }
.combo.flat { height: 20px; width: 100px; border: 0; background: #f7f7f7; }
.combo.flat select, .combo .muted { font-style: italic; color: #777; }
.combo.light { display: flex; align-items: center; padding-left: 4px; }
.account { display: flex; align-items: center; height: 22px; }
.account input { width: 180px; height: 19px; margin: 0 4px 0 6px; padding-left: 5px; background: #f7f7f7; }
.account input::placeholder { color: #444; opacity: 1; }
.user { width: 87px; padding-left: 3px; }
.user + .caret { margin-right: 10px; }
.account .rule { margin: 0 7px; }
.account .rule + svg { margin-right: 6px; }
.wins { display: flex; gap: 12px; padding: 0 5px 0 47px; }
.wins svg, .docwins svg { width: 14px; height: 14px; }

/* ribbon tabs */
.tabs { display: flex; height: 24px; align-items: flex-end; }
.tabs button { height: 20px; padding: 0 10px 2px; margin-right: 1px; color: #555; }
.tabs .file { width: 46px; margin-right: 2px; background: #f9a11b; color: #fff; }
.tabs .on { background: #f5f5f5; color: #333; padding: 0 8px 2px; margin: 0 2px 0 1px; }
.tabs .fold { display: flex; align-items: center; gap: 4px; padding-left: 21px; }
.fold svg { width: 16px; height: 10px; }

/* ribbon */
.ribbon { display: flex; background: #f5f5f5; height: 96px; border-bottom: 1px solid #ddd; }
.panel { display: flex; flex-direction: column; border-right: 1px solid #dadada; padding: 2px 4px 0 8px; }
.panel:last-child { border: 0; }
.tools { display: grid; flex: none; }
.visibility .tools { grid-template-columns: 62px 138px 128px; }
.appearance .tools { grid-template-columns: 72px 101px 133px 127px; }
.windows .tools { grid-template-columns: 57px 44px 55px 106px; }
.navigate .tools { grid-template-columns: 100px 95px 88px; }
.col { display: flex; flex-direction: column; align-items: flex-start; }
.col button { display: flex; align-items: center; gap: 4px; height: 24px; }
.col button.in { padding-left: 4px; gap: 3px; }
.col .caret { margin-left: 4px; }
.col button:disabled { color: #b5b5b5; }
.col .combo { width: 100px; margin: 1px 0; }
.col .combo.light { width: 133px; }
.combo.light select { padding-left: 1px; }
.col button.pressed { height: 22px; margin-top: 1px; border: 1px solid #2a5f9e; background: #aed2f7; padding: 0 4px 0 3px; }
.big { display: flex; flex-direction: column; align-items: center; padding-top: 3px; gap: 5px; height: 72px; line-height: 15px; }
.big svg { width: 30px; height: 30px; }
.big > .caret { margin-top: -2px; }
.big span { position: relative; }
.side .caret { position: absolute; right: -9px; top: 14px; }
.visibility .big, .appearance .big { padding-right: 6px; }
.navigate .big { padding-right: 12px; }
.windows .big { padding-right: 2px; }
.windows .switch { padding-right: 8px; }
.windows .side .caret { right: -5px; }
.name { display: flex; justify-content: center; align-items: center; gap: 6px; height: 20px; padding-right: 4px; }

/* model browser */
.work { flex: 1; display: flex; }
.browser { width: 164px; flex: none; display: flex; flex-direction: column; background: #f5f5f5; border-right: 1px solid #aaa; color: #222; overflow: hidden; }
.bhead { display: flex; height: 24px; align-items: center; background: #d9d9d9; gap: 6px; padding-right: 5px; }
.bhead svg { width: 16px; height: 16px; }
.btab { display: flex; align-items: center; gap: 6px; height: 24px; width: 58px; padding-left: 3px; background: #f5f5f5; }
.bhead .btab svg { width: 10px; height: 10px; }
.bhead .btab + button svg { width: 12px; height: 12px; }
.find { margin-left: auto; margin-right: 4px; }
.modes { display: flex; height: 32px; padding: 8px 0 0 7px; gap: 5px; font-family: Roboto, sans-serif; }
.modes button { height: 16px; }
.modes .on { color: #2b8fc9; border-bottom: 1px solid #2b8fc9; padding: 0 3px 0 1px; }
.modes button + button { border-left: 1px solid #555; padding-left: 6px; height: 14px; }
.tree { list-style: none; margin: 0; padding: 0; flex: 1; font-family: Roboto, "DejaVu Sans", sans-serif; }
.tree li { display: flex; align-items: center; height: 20px; gap: 2px; padding-left: 4px; white-space: nowrap; }
.tree li.root { padding-left: 2px; gap: 3px; font-family: "DejaVu Sans Condensed", "DejaVu Sans", sans-serif; }
.tree small { font: 9px/9px "DejaVu Sans", sans-serif; color: #000; }
.tree svg { width: 16px; height: 16px; }
.plus { flex: none; align-self: stretch; width: 12px; background: linear-gradient(#888, #888) 0 9px / 8px 2px no-repeat, linear-gradient(#888, #888) 3px 6px / 2px 8px no-repeat, repeating-linear-gradient(#aaa 0 1px, transparent 1px 3px) 4px 0 / 1px 20px no-repeat; }
.hscroll { display: flex; height: 17px; align-items: center; padding: 0 5px; }
.hscroll svg { width: 8px; height: 10px; }
.thumb { width: 114px; height: 17px; background: #cdcdcd; margin: 0 auto 0 4px; }

/* drawing area */
.stage { flex: 1; display: flex; flex-direction: column; min-width: 0; }
.viewport { flex: 1; position: relative; overflow: hidden; background: #c4d1e3; }
.scene { position: absolute; inset: 0; width: 100%; height: 100%; }
.axes { position: absolute; left: 11px; bottom: 38px; width: 60px; height: 56px; }
.ax { position: absolute; font: bold 11px/12px "Liberation Sans", sans-serif; }
.ax.y { left: 48px; bottom: 84px; color: #4c4; font-weight: normal; }
.ax.z { left: 12px; bottom: 46px; color: #33c; }
.ax.x { left: 56px; bottom: 44px; color: #d11; font-weight: normal; }
.docwins { position: absolute; top: 5px; right: 1px; display: flex; gap: 7px; }
.viewcube { position: absolute; right: 32px; top: 60px; width: 55px; height: 54px; border: 1px dashed #8b95a5; background: radial-gradient(#c3c8d0 40%, #d0d4dc); color: #7c838f; font-weight: bold; font-size: 12px; box-shadow: -4px 6px 6px -3px #7d899c; }
.navbar { position: absolute; right: 1px; top: 144px; width: 35px; height: 232px; border: 2px solid #8290a6; border-radius: 6px; background: #b9c4d6; display: flex; flex-direction: column; align-items: center; padding: 2px 0; }
.navbar button svg { width: 24px; height: 24px; }
.navbar .dot { width: 8px; height: 8px; align-self: flex-end; margin-right: 3px; }
.navbar .dot:first-child { margin-bottom: 10px; }
.navbar .dot:last-child { margin-top: auto; }
.navbar .caret { margin: 9px 0 5px; border-top-color: #5c6778; }
.navbar hr { width: 27px; margin: 0 0 5px; border: 0; border-top: 1px solid #8793a6; }
.navbar hr + button { margin-bottom: 7px; }
.ray { position: absolute; right: 10px; bottom: 11px; width: 220px; height: 99px; border: 1px solid #50565e; border-radius: 5px; background: linear-gradient(#72767b, #7c8187); color: #fff; overflow: hidden; }
.rayhead, .rayrow { display: grid; grid-template-columns: 1fr auto 1fr; align-items: center; justify-items: start; padding: 0 14px; height: 20px; }
.rayhead > :last-child, .rayrow > :last-child { grid-column: 3; justify-self: end; }
.rayhead { background: #a2a7ab; }
.up { border: 3px solid transparent; border-bottom: 6px solid #333; border-top: 0; }
.rayrow { margin-top: 5px; }
.bar { margin: 6px 11px 0 9px; height: 12px; padding: 2px; border: 1px solid #222; border-radius: 6px; background: #4c5260; }
.bar div { height: 6px; border-radius: 3px; background: #201cb4; }
.rayrow.acts { margin-top: 6px; padding: 0 15px; }
.acts button:disabled { color: #92969b; }
.docs { display: flex; height: 24px; background: #d9d9d9; }
.docs button { padding: 0 8px; color: #555; }
.docs .on { display: flex; align-items: center; gap: 7px; padding: 0 6px 0 8px; background: #f5f5f5; color: #2b87c0; border-bottom: 3px solid #42a1cf; }
.docs .on svg { width: 10px; height: 10px; }
.docs .more { margin-left: auto; padding: 0 4px; }
.docs .more svg { width: 16px; height: 16px; }
.status { display: flex; height: 20px; align-items: center; padding-left: 1px; background: #eee; }
.status span:first-child { flex: 1; }
.status .num { width: 39px; padding-left: 9px; border-left: 1px solid #ddd; }
```
